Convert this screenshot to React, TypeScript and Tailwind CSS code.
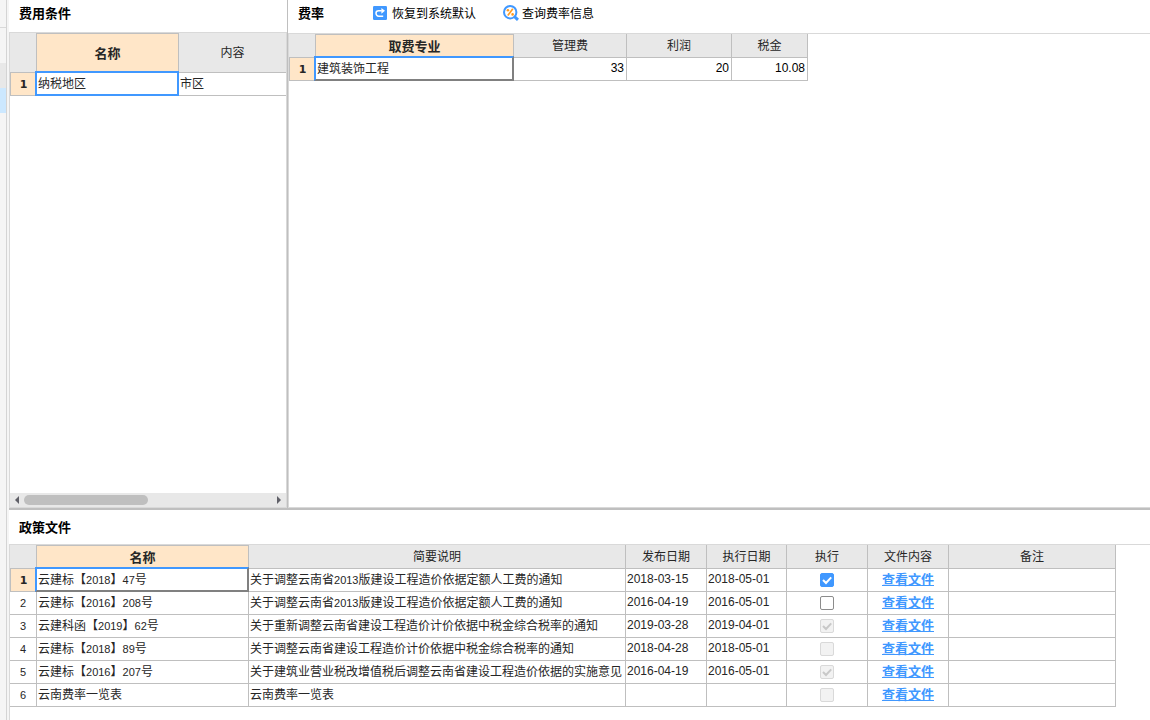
import { useState, ReactNode } from "react";
import { clsx } from "clsx";

interface PolicyFile {
  id: number;
  name: string;
  summary: string;
  published: string;
  effective: string;
  applied: boolean;
  locked: boolean;
}

const POLICY_FILES: PolicyFile[] = [
  { id: 1, name: "云建标【2018】47号", summary: "关于调整云南省2013版建设工程造价依据定额人工费的通知", published: "2018-03-15", effective: "2018-05-01", applied: true, locked: false },
  { id: 2, name: "云建标【2016】208号", summary: "关于调整云南省2013版建设工程造价依据定额人工费的通知", published: "2016-04-19", effective: "2016-05-01", applied: false, locked: false },
  { id: 3, name: "云建科函【2019】62号", summary: "关于重新调整云南省建设工程造价计价依据中税金综合税率的通知", published: "2019-03-28", effective: "2019-04-01", applied: true, locked: true },
  { id: 4, name: "云建标【2018】89号", summary: "关于调整云南省建设工程造价计价依据中税金综合税率的通知", published: "2018-04-28", effective: "2018-05-01", applied: false, locked: true },
  { id: 5, name: "云建标【2016】207号", summary: "关于建筑业营业税改增值税后调整云南省建设工程造价依据的实施意见", published: "2016-04-19", effective: "2016-05-01", applied: true, locked: true },
  { id: 6, name: "云南费率一览表", summary: "云南费率一览表", published: "", effective: "", applied: false, locked: true },
];

// Digits inside Chinese text are set a size smaller, about half a character wide
function MixedText({ text }: { text: string }) {
  return (
    <>
      {text.split(/(\d+)/).map((part, i) =>
        /^\d+$/.test(part) ? (
          <span key={i} className="font-['Liberation_Sans',sans-serif] text-[11px]">
            {part}
          </span>
        ) : (
          part
        )
      )}
    </>
  );
}

function HeadCell({ children, active, last }: { children?: ReactNode; active?: boolean; last?: boolean }) {
  return (
    <th
      scope="col"
      className={clsx(
        "border-b border-[#bfbfbf] p-0 text-center",
        !last && "border-r",
        active ? "border-t bg-[#ffe6c8] text-[13px] font-bold" : "bg-[#e8e8e8] pb-0.5 font-normal"
      )}
    >
      {children}
    </th>
  );
}

function RowHead({ children, active }: { children: ReactNode; active?: boolean }) {
  return (
    <th
      scope="row"
      className={clsx(
        "h-[23px] border-r border-b border-[#bfbfbf] p-0 text-center",
        active
          ? "border-l bg-[#ffe6c8] pt-0.5 font-['DejaVu_Sans',sans-serif] text-[11px] font-bold"
          : "bg-white font-['Liberation_Sans',sans-serif] text-[11px] font-normal"
      )}
    >
      {children}
    </th>
  );
}

function Cell({ children, last, className }: { children?: ReactNode; last?: boolean; className?: string }) {
  return (
    <td
      className={clsx(
        "relative h-[23px] border-b border-[#bfbfbf] p-0 whitespace-nowrap",
        !last && "border-r",
        className
      )}
    >
      {children}
    </td>
  );
}

// Frame over the current cell; grey on two sides when the cell is not editable
function CellFocus({ readOnly }: { readOnly?: boolean }) {
  return (
    <span
      className={clsx(
        "pointer-events-none absolute -top-0.5 -right-px -bottom-px -left-0.5 border-2 border-[#4098ff]",
        readOnly && "border-r-[#808080] border-b-[#808080]"
      )}
    />
  );
}

function ApplyBox({ file, onToggle }: { file: PolicyFile; onToggle: () => void }) {
  return (
    <label className="relative mx-auto block size-3.5">
      <input
        type="checkbox"
        aria-label={`执行 ${file.name}`}
        checked={file.applied}
        disabled={file.locked}
        onChange={onToggle}
        className="block size-3.5 appearance-none rounded-xs border border-[#8c8c8c] bg-white checked:border-[#4098ff] checked:bg-[#4098ff] disabled:border-[#d9d9d9] disabled:bg-[#f2f2f2]"
      />
      {file.applied && (
        <svg
          className={clsx("pointer-events-none absolute inset-0 size-3.5", file.locked ? "text-[#c8c8c8]" : "text-white")}
          viewBox="0 0 14 14"
          fill="none"
          stroke="currentColor"
          strokeWidth={2}
        >
          <path d="M3 7l3 3 5.2-5.6" />
        </svg>
      )}
    </label>
  );
}

function RestoreIcon() {
  return (
    <svg className="size-3.5" viewBox="0 0 14 14" fill="none">
      <rect width="14" height="14" rx="1.2" fill="#4098ff" />
      <path d="M8.8 4.8H5.6C4.1 4.8 3 5.9 3 7.3s1.1 2.9 2.6 2.9h4.6" stroke="#fff" strokeWidth="1.5" />
      <path d="M8.4 1.9L12 4.8 8.4 7.7z" fill="#fff" />
    </svg>
  );
}

function QueryIcon() {
  return (
    <svg className="size-4" viewBox="0 0 16 16" fill="none">
      <circle cx="7.2" cy="7.2" r="6.2" stroke="#4098ff" strokeWidth="2" />
      <path d="M11.2 11.4l3.8 3.5" stroke="#4098ff" strokeWidth="3" />
      <path d="M9.8 3.8L4.8 10.6" stroke="#ff9a1f" strokeWidth="1.7" />
      <circle cx="4.9" cy="5.2" r="1.3" fill="#ff9a1f" />
      <circle cx="9.6" cy="9.4" r="1.3" fill="#ff9a1f" />
    </svg>
  );
}

export default function App() {
  const [files, setFiles] = useState(POLICY_FILES);

  const toggle = (id: number) => {
    setFiles((list) => list.map((f) => (f.id === id ? { ...f, applied: !f.applied } : f)));
  };

  return (
    <div className="flex h-screen bg-[#f5f5f5] font-['Noto_Sans_CJK_SC',sans-serif] text-[12px] leading-4 text-[#262626]">
      {/* Edge of the collapsed project tree */}
      <aside className="mr-0.5 w-[7px] shrink-0 border-r border-[#d4d4d4]">
        <div className="h-7 border-b border-[#d9d9d9]" />
        <div className="mt-[35px] h-[25px] bg-[#e8e8e8]" />
        <div className="h-[25px] bg-[#cce8ff]" />
      </aside>

      <main className="flex min-w-0 flex-1 flex-col bg-white">
        <div className="flex min-h-0 flex-1 border-b-2 border-[#bfbfbf]">
          {/* Fee conditions */}
          <section className="flex w-[279px] shrink-0 flex-col border-r border-[#bfbfbf]">
            <h2 className="flex h-8 shrink-0 items-center pb-1.5 pl-2.5 text-[13px] font-bold text-black">费用条件</h2>
            <div className="flex flex-1 flex-col border border-[#d9d9d9]">
              <table className="w-full table-fixed border-separate border-spacing-0">
                <colgroup>
                  <col className="w-[27px]" />
                  <col className="w-[142px]" />
                  <col />
                </colgroup>
                <thead>
                  <tr className="h-10">
                    <HeadCell />
                    <HeadCell active>名称</HeadCell>
                    <HeadCell last>内容</HeadCell>
                  </tr>
                </thead>
                <tbody>
                  <tr>
                    <RowHead active>1</RowHead>
                    <Cell className="pb-0.5 pl-px">
                      纳税地区
                      <CellFocus />
                    </Cell>
                    <Cell last className="pb-0.5 pl-px">市区</Cell>
                  </tr>
                </tbody>
              </table>
              <div className="mt-auto flex h-3.5 items-center bg-[#e8e8e8] px-[5px]">
                <svg className="h-2 w-1 shrink-0" viewBox="0 0 4 8" fill="#606068">
                  <path d="M4 0v8L0 4z" />
                </svg>
                <div className="flex-1 px-[5px]">
                  <div className="h-2.5 w-1/2 rounded-full bg-[#bfbfbf]" />
                </div>
                <svg className="h-2 w-1 shrink-0" viewBox="0 0 4 8" fill="#606068">
                  <path d="M0 0v8l4-4z" />
                </svg>
              </div>
            </div>
          </section>

          {/* Rates */}
          <section className="flex min-w-0 flex-1 flex-col">
            <div className="flex h-[33px] shrink-0 items-center pb-[7px] pl-2.5 text-black">
              <h2 className="mr-[49px] text-[13px] font-bold">费率</h2>
              <button type="button" className="mr-[27px] flex items-center gap-[5px]">
                <RestoreIcon />
                恢复到系统默认
              </button>
              <button type="button" className="flex items-center gap-[3px]">
                <QueryIcon />
                查询费率信息
              </button>
            </div>
            <div className="flex-1 border border-r-0 border-[#d9d9d9]">
              <table className="w-[519px] table-fixed border-separate border-spacing-0">
                <colgroup>
                  <col className="w-[27px]" />
                  <col className="w-[198px]" />
                  <col className="w-[113px]" />
                  <col className="w-[105px]" />
                  <col className="w-[76px]" />
                </colgroup>
                <thead>
                  <tr className="h-6">
                    <HeadCell />
                    <HeadCell active>取费专业</HeadCell>
                    <HeadCell>管理费</HeadCell>
                    <HeadCell>利润</HeadCell>
                    <HeadCell>税金</HeadCell>
                  </tr>
                </thead>
                <tbody>
                  <tr>
                    <RowHead active>1</RowHead>
                    <Cell className="pb-0.5 pl-px">
                      建筑装饰工程
                      <CellFocus readOnly />
                    </Cell>
                    {["33", "20", "10.08"].map((rate) => (
                      <Cell key={rate} className="pr-0.5 pb-0.5 text-right font-['Liberation_Sans',sans-serif] text-black">
                        {rate}
                      </Cell>
                    ))}
                  </tr>
                </tbody>
              </table>
            </div>
          </section>
        </div>

        {/* Policy files */}
        <section className="shrink-0">
          <h2 className="flex h-[34px] items-center pl-2.5 text-[13px] font-bold text-black">政策文件</h2>
          <div className="border-t border-l border-[#d9d9d9] pb-[13px]">
            <table className="w-[1106px] table-fixed border-separate border-spacing-0">
              <colgroup>
                <col className="w-[27px]" />
                <col className="w-[212px]" />
                <col className="w-[377px]" />
                <col className="w-[81px]" />
                <col className="w-[80px]" />
                <col className="w-[81px]" />
                <col className="w-[81px]" />
                <col className="w-[167px]" />
              </colgroup>
              <thead>
                <tr className="h-6">
                  <HeadCell />
                  <HeadCell active>名称</HeadCell>
                  <HeadCell>简要说明</HeadCell>
                  <HeadCell>发布日期</HeadCell>
                  <HeadCell>执行日期</HeadCell>
                  <HeadCell>执行</HeadCell>
                  <HeadCell>文件内容</HeadCell>
                  <HeadCell>备注</HeadCell>
                </tr>
              </thead>
              <tbody>
                {files.map((file) => (
                  <tr key={file.id}>
                    <RowHead active={file.id === 1}>{file.id}</RowHead>
                    <Cell className="pb-0.5 pl-px">
                      <MixedText text={file.name} />
                      {file.id === 1 && <CellFocus readOnly />}
                    </Cell>
                    <Cell className="pb-0.5 pl-px">
                      <MixedText text={file.summary} />
                    </Cell>
                    <Cell className="pb-0.5 pl-px font-['Liberation_Sans',sans-serif]">{file.published}</Cell>
                    <Cell className="pb-0.5 pl-px font-['Liberation_Sans',sans-serif]">{file.effective}</Cell>
                    <Cell>
                      <ApplyBox file={file} onToggle={() => toggle(file.id)} />
                    </Cell>
                    <Cell className="pb-0.5 text-center">
                      <a href="#" className="text-[13px] font-bold text-[#4098ff] underline">
                        查看文件
                      </a>
                    </Cell>
                    <Cell />
                  </tr>
                ))}
              </tbody>
            </table>
          </div>
        </section>
      </main>
    </div>
  );
}
